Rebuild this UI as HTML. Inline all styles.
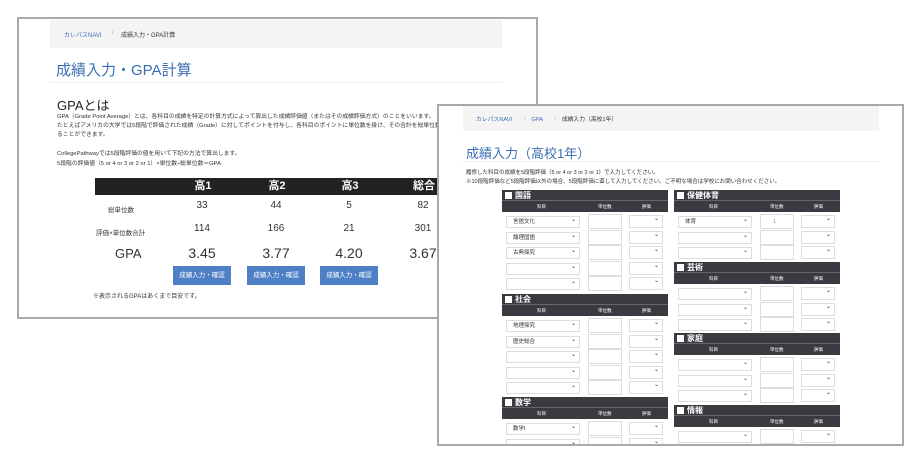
<!DOCTYPE html>
<html><head><meta charset="utf-8"><style>
*{margin:0;padding:0;box-sizing:border-box}
body{width:920px;height:465px;background:#fff;position:relative;overflow:hidden;font-family:"Liberation Sans","Noto Sans CJK JP",sans-serif;color:#333}
.a{position:absolute;white-space:nowrap}
.w1{position:absolute;left:17px;top:17px;width:521px;height:302px;border:2px solid #a9a9a9;background:#fff;overflow:hidden}
.w2{position:absolute;left:437px;top:104px;width:467px;height:342px;border:2px solid #a9a9a9;background:#fff;overflow:hidden}
.bc{position:absolute;background:#f4f4f4}
.blue{color:#3b6fb5}
.th{background:#222;color:#fff;font-weight:bold;font-size:11px}
.btn{position:absolute;background:#4f80c6;color:#fff;font-size:6.5px;text-align:center;line-height:19px;width:58px;height:19px}
.n{position:absolute;width:60px;text-align:center}
.blk{position:absolute;width:166px}
.hd{background:#3a3b40;height:22px;color:#fff}
.hd .t{font-size:8px;font-weight:bold;height:11px;line-height:11px;padding-left:3px;border-bottom:1px solid #666}
.hd .t:before{content:"";display:inline-block;width:7px;height:7px;background:#fff;margin-right:3px;vertical-align:-1px}
.hd .s{font-size:4.5px;height:11px;line-height:11px;position:relative}
.hd .s span{position:absolute}
.r{height:15.6px;position:relative}
.r i{position:absolute;border:1px solid #ddd;background:#fff;font-style:normal;font-size:5.5px;line-height:11px;padding-left:6px}
.r i.v:after{content:"⌄";position:absolute;right:3px;top:-2px;font-size:6px}
</style></head><body>
<div class="w1">
 <div class="bc" style="left:31px;top:1px;width:452px;height:28px"></div>
 <div class="a blue" style="left:45px;top:11px;font-size:6px">カレパスNAVI</div>
 <div class="a" style="left:93px;top:11px;font-size:6px;color:#aaa">/</div>
 <div class="a" style="left:102px;top:11px;font-size:6px">成績入力・GPA計算</div>
 <div class="a blue" style="left:37px;top:40px;font-size:15px">成績入力・GPA計算</div>
 <div class="a" style="left:31px;top:63px;width:452px;height:1px;background:#eee"></div>
 <div class="a" style="left:38px;top:76px;font-size:13px;color:#222">GPAとは</div>
 <div class="a" style="left:38px;top:94px;font-size:5.8px;line-height:9px">GPA（Grade Point Average）とは、各科目の成績を特定の計算方式によって算出した成績評価値（またはその成績評価方式）のことをいいます。<br>たとえばアメリカの大学では5段階で評価された成績（Grade）に対してポイントを付与し、各科目のポイントに単位数を掛け、その合計を総単位数で割った<br>ることができます。</div>
 <div class="a" style="left:38px;top:131px;font-size:5.8px;line-height:9.5px">CollegePathwayでは5段階評価の値を用いて下記の方法で算出します。<br>5段階の評価値（5 or 4 or 3 or 2 or 1）×単位数÷総単位数＝GPA</div>
 <div class="a th" style="left:76px;top:159px;width:380px;height:17px;line-height:17px">
  <span class="n" style="left:78px">高1</span><span class="n" style="left:152px">高2</span><span class="n" style="left:225px">高3</span><span class="n" style="left:299px">総合</span></div>
 <div class="a" style="left:89px;top:185px;font-size:6.5px">総単位数</div>
 <div class="a" style="left:77px;top:208px;font-size:6.5px">評価×単位数合計</div>
 <div class="a" style="left:96px;top:227px;font-size:13px">GPA</div>
</div>
<div class="a" style="left:0;top:200px;font-size:10px;width:500px;height:12px">
 <span class="n" style="left:172px">33</span><span class="n" style="left:246px">44</span><span class="n" style="left:319px">5</span><span class="n" style="left:393px">82</span></div>
<div class="a" style="left:0;top:223px;font-size:10px;width:500px;height:12px">
 <span class="n" style="left:172px">114</span><span class="n" style="left:246px">166</span><span class="n" style="left:319px">21</span><span class="n" style="left:393px">301</span></div>
<div class="a" style="left:0;top:245px;font-size:14px;width:500px;height:16px">
 <span class="n" style="left:172px">3.45</span><span class="n" style="left:246px">3.77</span><span class="n" style="left:319px">4.20</span><span class="n" style="left:393px">3.67</span></div>
<div class="btn" style="left:173px;top:266px">成績入力・確認</div>
<div class="btn" style="left:247px;top:266px">成績入力・確認</div>
<div class="btn" style="left:320px;top:266px">成績入力・確認</div>
<div class="a" style="left:93px;top:291px;font-size:6px">※表示されるGPAはあくまで目安です。</div>

<div class="w2">
 <div class="bc" style="left:24px;top:0;width:416px;height:25px"></div>
 <div class="a blue" style="left:37px;top:8px;font-size:5.8px">カレパスNAVI<span style="color:#aaa">　　/　</span>GPA<span style="color:#aaa">　　/　</span><span style="color:#333">成績入力（高校1年）</span></div>
 <div class="a blue" style="left:27px;top:37px;font-size:13px">成績入力（高校1年）</div>
 <div class="a" style="left:24px;top:55px;width:416px;height:1px;background:#eee"></div>
 <div class="a" style="left:27px;top:63px;font-size:5.5px;line-height:9px">履修した科目の成績を5段階評価（5 or 4 or 3 or 2 or 1）で入力してください。<br>※10段階評価など5段階評価以外の場合、5段階評価に直して入力してください。ご不明な場合は学校にお問い合わせください。</div>
 <div id="t"></div>
</div>
<script>
function blk(x,y,t,rows){x-=439;y-=106;let h='<div class="blk" style="left:'+x+'px;top:'+y+'px"><div class="hd"><div class="t">'+t+'</div><div class="s"><span style="left:35px">科目</span><span style="left:96px">単位数</span><span style="left:140px">評価</span></div></div><div style="height:2px"></div>';
for(const r of rows){h+='<div class="r"><i class="v" style="left:4px;top:2px;width:74px;height:12px">'+(r[0]||'')+'</i><i style="left:86px;top:0;width:34px;height:15px;color:#999;padding-left:12px;line-height:14px">'+(r[1]||'')+'</i><i class="v" style="left:127px;top:1px;width:34px;height:13px"></i></div>';}
return h+'</div>';}
const e=[[],[],[]];
document.getElementById('t').innerHTML=
blk(502,190,'国語',[['言語文化'],['論理国語'],['古典探究'],[],[]])+
blk(502,294,'社会',[['地理探究'],['歴史総合'],[],[],[]])+
blk(502,397,'数学',[['数学I'],[],[]])+
blk(674,190,'保健体育',[['体育','1'],[],[]])+
blk(674,262,'芸術',e)+
blk(674,333,'家庭',e)+
blk(674,405,'情報',[[]]);
</script>
</body></html>
